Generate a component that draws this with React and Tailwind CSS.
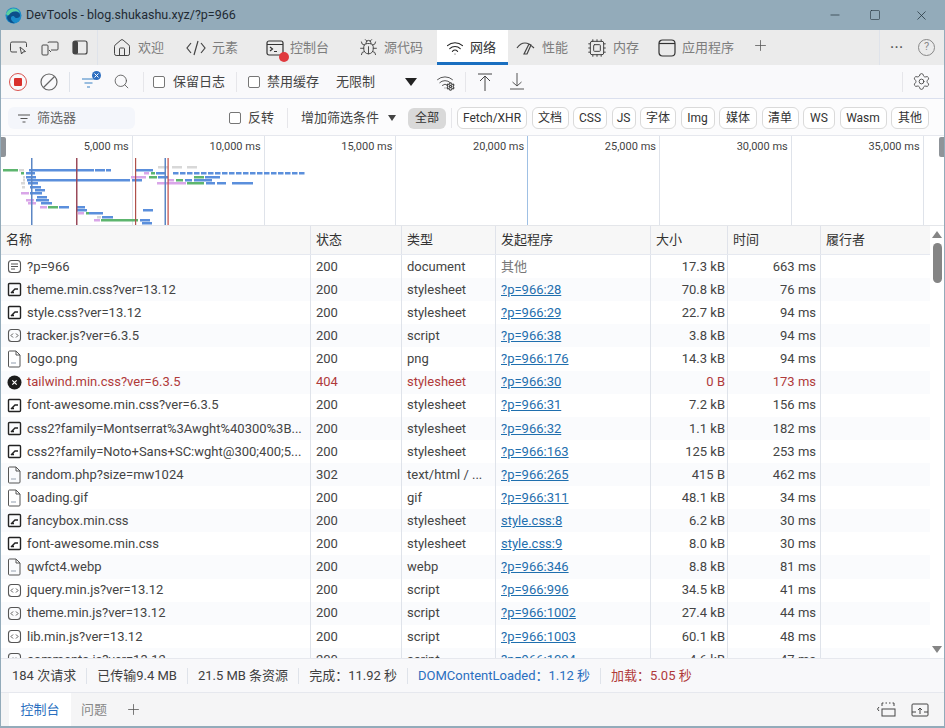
import React from 'react';
import { House, Bug, Wifi, Cpu, Plus, Settings, Search, Minus, X, Square } from 'lucide-react';

const FONT = "font-['Roboto','Noto_Sans_CJK_SC',sans-serif]";

const COLS = ['w-[310px]', 'w-[91px]', 'w-[94px]', 'w-[155px]', 'w-[77px]', 'w-[93px]', 'flex-1'];

const rows = [
  ['doc', '?p=966', '200', 'document', '其他', '17.3 kB', '663 ms'],
  ['css', 'theme.min.css?ver=13.12', '200', 'stylesheet', '?p=966:28', '70.8 kB', '76 ms'],
  ['css', 'style.css?ver=13.12', '200', 'stylesheet', '?p=966:29', '22.7 kB', '94 ms'],
  ['js', 'tracker.js?ver=6.3.5', '200', 'script', '?p=966:38', '3.8 kB', '94 ms'],
  ['img', 'logo.png', '200', 'png', '?p=966:176', '14.3 kB', '94 ms'],
  ['err', 'tailwind.min.css?ver=6.3.5', '404', 'stylesheet', '?p=966:30', '0 B', '173 ms'],
  ['css', 'font-awesome.min.css?ver=6.3.5', '200', 'stylesheet', '?p=966:31', '7.2 kB', '156 ms'],
  ['css', 'css2?family=Montserrat%3Awght%40300%3B...', '200', 'stylesheet', '?p=966:32', '1.1 kB', '182 ms'],
  ['css', 'css2?family=Noto+Sans+SC:wght@300;400;5...', '200', 'stylesheet', '?p=966:163', '125 kB', '253 ms'],
  ['img', 'random.php?size=mw1024', '302', 'text/html / ...', '?p=966:265', '415 B', '462 ms'],
  ['img', 'loading.gif', '200', 'gif', '?p=966:311', '48.1 kB', '34 ms'],
  ['css', 'fancybox.min.css', '200', 'stylesheet', 'style.css:8', '6.2 kB', '30 ms'],
  ['css', 'font-awesome.min.css', '200', 'stylesheet', 'style.css:9', '8.0 kB', '30 ms'],
  ['img', 'qwfct4.webp', '200', 'webp', '?p=966:346', '8.8 kB', '81 ms'],
  ['js', 'jquery.min.js?ver=13.12', '200', 'script', '?p=966:996', '34.5 kB', '41 ms'],
  ['js', 'theme.min.js?ver=13.12', '200', 'script', '?p=966:1002', '27.4 kB', '44 ms'],
  ['js', 'lib.min.js?ver=13.12', '200', 'script', '?p=966:1003', '60.1 kB', '48 ms'],
  ['js', 'comments.js?ver=13.12', '200', 'script', '?p=966:1004', '4.6 kB', '47 ms'],
];

const chips = [
  ['Fetch/XHR', 'w-[70px]'],
  ['文档', 'w-[37px]'],
  ['CSS', 'w-[34px]'],
  ['JS', 'w-[24px]'],
  ['字体', 'w-[36px]'],
  ['Img', 'w-[34px]'],
  ['媒体', 'w-[38px]'],
  ['清单', 'w-[37px]'],
  ['WS', 'w-[32px]'],
  ['Wasm', 'w-[47px]'],
  ['其他', 'w-[38px]'],
];

// x, width, row y, colour for the overview bars
const B = '#5b8fdc', G = '#5db56e', P = '#d9a6e8', L = '#d8d8d8';
const bars = [
  [2, 15, 33, G], [18, 5, 33, L], [28, 65, 33, B], [94, 10, 33, B], [105, 5, 33, B], [135, 7, 33, B], [142, 10, 33, B],
  [20, 3, 36, G], [25, 9, 36, B], [143, 5, 36, P], [150, 4, 36, G], [155, 10, 36, B],
  [22, 2, 40, L], [25, 10, 40, B], [130, 15, 40, P], [148, 8, 40, G], [157, 10, 40, B], [193, 10, 40, G], [204, 15, 40, B],
  [22, 2, 43, L], [26, 103, 43, B], [131, 10, 43, B], [167, 6, 43, P], [175, 7, 43, G], [184, 7, 43, B], [193, 18, 43, B],
  [20, 4, 46, L], [27, 10, 46, B], [156, 29, 46, P], [186, 17, 46, G], [205, 9, 46, B], [216, 9, 46, B], [231, 21, 46, B],
  [21, 3, 50, L], [29, 11, 50, B], [34, 10, 53, B], [20, 8, 56, P], [29, 12, 56, B], [36, 10, 60, B],
  [25, 8, 63, P], [35, 13, 63, B], [27, 8, 66, P], [40, 11, 66, B],
  [39, 7, 70, P], [47, 10, 70, G], [58, 10, 70, B], [75, 9, 70, B], [76, 10, 73, B], [142, 10, 73, B],
  [77, 6, 76, P], [85, 3, 76, G], [88, 14, 76, B], [96, 4, 80, L], [101, 11, 80, B],
  [93, 6, 83, P], [100, 37, 83, G], [139, 10, 83, B], [141, 10, 86, B],
];
// long dashed download row that runs along the top of the second group
for (let x = 172; x < 300; x += 7) bars.push([x, 5.5, 36, B]);
for (const x of [157, 171, 186]) bars.push([x, 10, 30, L]);

function ReqIcon({ type }) {
  if (type === 'err') {
    return (
      <svg width="15" height="15" viewBox="0 0 15 15" className="shrink-0">
        <circle cx="7.5" cy="7.5" r="7" fill="#1c1c1c" />
        <path d="M5.3 5.3l4.4 4.4M9.7 5.3l-4.4 4.4" stroke="#fff" strokeWidth="1.2" />
      </svg>
    );
  }
  if (type === 'img') {
    return (
      <svg width="15" height="18" viewBox="0 0 15 18" fill="none" className="shrink-0">
        <path d="M2.5 1h6.5l4 4v11a1 1 0 0 1-1 1H2.5a1 1 0 0 1-1-1V2a1 1 0 0 1 1-1z M9 1v4h4" stroke="#555" />
        <path d="M4 13h5" stroke="#c8ced6" strokeWidth="2" />
      </svg>
    );
  }
  return (
    <svg width="15" height="15" viewBox="0 0 15 15" fill="none" className="shrink-0">
      <rect x="1.5" y="1.5" width="12" height="12" rx={type === 'css' ? 1 : 3} stroke={type === 'css' ? '#222' : '#555'} strokeWidth={type === 'css' ? 1.4 : 1.1} />
      {type === 'doc' && <path d="M4 5h7M4 7.5h7M4 10h4" stroke="#555" />}
      {type === 'css' && <path d="M4 11l4-4h3M4.500 10.500h2.500" stroke="#222" strokeWidth="1.400" />}
      {type === 'js' && <path d="M6 5.500L4 7.500l2 2M9 5.500l2 2-2 2" stroke="#555" />}
    </svg>
  );
}

function Tab({ icon, label, width, active }) {
  return (
    <div className={`flex h-full shrink-0 items-center gap-[6px] ${width} ${active ? 'border-b-[3px] border-[#1a6fc0] bg-white pl-[9px] pt-[3px] text-[#333]' : 'text-[#7d7d7d]'}`}>
      {icon}
      <span>{label}</span>
    </div>
  );
}

function Check({ className = '' }) {
  return <span className={`h-[12px] w-[12px] shrink-0 rounded-[2px] border border-[#767676] bg-white ${className}`} />;
}

function Divider({ className = '' }) {
  return <span className={`w-px shrink-0 bg-[#dfe3ea] ${className}`} />;
}

export default function App() {
  return (
    <div className={`${FONT} flex h-[728px] w-[945px] flex-col overflow-hidden border-x border-b-2 border-[#93abba] bg-white text-[13px] text-[#444]`}>
      {/* title bar */}
      <div className="-mx-px flex h-[30px] shrink-0 items-center bg-[#93abba] pl-[5px] text-[#222]">
        <svg width="17" height="17" viewBox="0 0 17 17" className="shrink-0">
          <circle cx="8.5" cy="8.5" r="8" fill="#1b8bc9" />
          <path d="M2 11c1-6 8-8 12-5 2 2 1 5-2 5-3 0-2-2-4-2-3 0-3 5 2 7-4 1-7-2-8-5z" fill="#0c4f8a" />
          <path d="M1 7C3 1 12-1 15 6c-3-3-9-2-11 2-1 1-2 0-3-1z" fill="#59d0a0" />
        </svg>
        <span className="ml-[4px] text-[12.500px] text-[#1f2a33]">DevTools - blog.shukashu.xyz/?p=966</span>
        <div className="ml-auto flex items-center text-[#22313b]">
          <Minus size={14} strokeWidth={1.2} className="mr-[27px]" />
          <Square size={12} strokeWidth={1.2} className="mr-[33px] rounded-[2px]" />
          <X size={15} strokeWidth={1.2} className="mr-[16px]" />
        </div>
      </div>

      {/* main tabs */}
      <div className="flex h-[35px] shrink-0 items-center bg-[#ebebeb] text-[13px]">
        <div className="flex w-[96px] shrink-0 items-center pl-[8px] text-[#4a4a4a]">
          <svg width="20" height="16" viewBox="0 0 20 16" fill="none" stroke="currentColor">
            <path d="M8 12H3a1.500 1.500 0 0 1-1.500-1.500v-7A1.500 1.500 0 0 1 3 2h13a1.500 1.500 0 0 1 1.500 1.500V7" />
            <path d="M11 7l1.500 7 1.500-2 2.500-.5z" />
          </svg>
          <svg width="18" height="16" viewBox="0 0 18 16" fill="none" stroke="currentColor" className="ml-[12px]">
            <rect x="1" y="5" width="6" height="10" rx="1" />
            <path d="M7 3a1 1 0 0 1 1-1h8a1 1 0 0 1 1 1v6a1 1 0 0 1-1 1h-6M8 10l2 2" />
          </svg>
          <svg width="16" height="15" viewBox="0 0 16 15" className="ml-[13px]">
            <rect x="1" y="1" width="14" height="13" rx="2" fill="none" stroke="#444" strokeWidth="1.200" />
            <rect x="1" y="1" width="5" height="13" rx="1.500" fill="#444" />
          </svg>
        </div>
        <Divider className="h-full bg-[#cfcfcf]" />
        <div className="ml-[14px] flex h-full items-center">
          <Tab width="w-[74px]" label="欢迎" icon={<House size={20} strokeWidth={1.200} className="text-[#444]" />} />
          <Tab width="w-[80px]" label="元素" icon={
            <svg width="20" height="16" viewBox="0 0 20 16" fill="none" stroke="#444" strokeWidth="1.200"><path d="M5 3L1 8l4 5M15 3l4 5-4 5M12 1L8 15" /></svg>
          } />
          <Tab width="w-[93px]" label="控制台" icon={
            <span className="relative flex">
              <svg width="18" height="16" viewBox="0 0 18 16" fill="none" stroke="#333" strokeWidth="1.200"><rect x="1" y="1" width="16" height="14" rx="2" /><path d="M1 4.500h16M4 7l2.500 2L4 11M8 11.500h3" /></svg>
              <span className="absolute -bottom-[6px] -right-[5px] h-[10px] w-[10px] rounded-full bg-[#e0393e]" />
            </span>
          } />
          <Tab width="w-[78px]" label="源代码" icon={<Bug size={19} strokeWidth={1.200} className="text-[#444]" />} />
          <Tab width="w-[71px]" active label="网络" icon={<Wifi size={18} strokeWidth={1.400} className="text-[#222]" />} />
          <div className="w-[8px] shrink-0" />
          <Tab width="w-[71px]" label="性能" icon={
            <svg width="20" height="14" viewBox="0 0 20 14" fill="none" stroke="#444" strokeWidth="1.200"><path d="M1 7c2-3 5-5 8-5s6 2 9 5M8 13l5-10 2 1-4 9z" /></svg>
          } />
          <Tab width="w-[71px]" label="内存" icon={<Cpu size={20} strokeWidth={1.200} className="text-[#444]" />} />
          <Tab width="w-[94px]" label="应用程序" icon={
            <svg width="18" height="18" viewBox="0 0 18 18" fill="none" stroke="#333" strokeWidth="1.200"><rect x="1" y="1" width="16" height="16" rx="3.500" /><path d="M1 4.500h16" /></svg>
          } />
          <Plus size={17} strokeWidth={1.100} className="-mt-[4px] text-[#555]" />
        </div>
        <Divider className="ml-auto h-full bg-[#d6d6d6]" />
        <span className="ml-[10px] text-[12px] font-bold tracking-[1px] text-[#555]">···</span>
        <span className="ml-[14px] mr-[9px] flex h-[17px] w-[17px] items-center justify-center rounded-full border border-[#888] text-[11px] text-[#888]">?</span>
      </div>

      {/* network toolbar */}
      <div className="flex h-[34px] shrink-0 items-center border-b border-[#dbe0ee] bg-[#f9f9fb] pl-[8px]">
        <span className="flex h-[18px] w-[18px] shrink-0 items-center justify-center rounded-full border-[1.500px] border-[#d9534f]">
          <span className="h-[8px] w-[8px] rounded-[1px] bg-[#d9302c]" />
        </span>
        <svg width="18" height="18" viewBox="0 0 18 18" fill="none" stroke="#666" strokeWidth="1.200" className="ml-[13px] shrink-0"><circle cx="9" cy="9" r="8" /><path d="M3.500 14.500l11-11" /></svg>
        <Divider className="ml-[11px] h-[20px]" />
        <span className="relative ml-[11px] flex shrink-0">
          <svg width="16" height="14" viewBox="0 0 16 14" fill="none" stroke="#3b82c4" strokeWidth="1.200"><path d="M1 4h13M3.500 8h8M6 12h3" /></svg>
          <span className="absolute -right-[4px] -top-[4px] flex h-[9px] w-[9px] items-center justify-center rounded-full bg-[#2f6fc0]">
            <svg width="5" height="5" viewBox="0 0 5 5" stroke="#fff"><path d="M.5.500l4 4M4.500.500l-4 4" /></svg>
          </span>
        </span>
        <Search size={17} strokeWidth={1.200} className="ml-[16px] shrink-0 text-[#555]" />
        <Divider className="ml-[13px] h-[20px] bg-[#e6e6ea]" />
        <Check className="ml-[9px]" />
        <span className="ml-[8px] w-[63px]">保留日志</span>
        <Divider className="h-[20px] bg-[#e6e6ea]" />
        <Check className="ml-[11px]" />
        <span className="ml-[7px] w-[69px]">禁用缓存</span>
        <span className="w-[69px]">无限制</span>
        <svg width="12" height="8" viewBox="0 0 12 8" className="shrink-0"><path d="M0 0h12L6 8z" fill="#222" /></svg>
        <span className="relative ml-[19px] flex shrink-0">
          <Wifi size={18} strokeWidth={1.200} className="text-[#444]" />
          <Settings size={9} strokeWidth={3} className="absolute -right-[1px] bottom-0 text-[#444]" />
        </span>
        <Divider className="ml-[11px] h-[20px] bg-[#e6e6ea]" />
        <svg width="14" height="18" viewBox="0 0 14 18" fill="none" stroke="#444" className="ml-[12px] shrink-0"><path d="M0 1h14M7 18V3M2 8l5-5 5 5" /></svg>
        <svg width="14" height="17" viewBox="0 0 14 17" fill="none" stroke="#555" className="ml-[18px] shrink-0"><path d="M0 16h14M7 0v13M2.500 9L7 13l4.500-4" /></svg>
        <Divider className="ml-auto h-[20px] bg-[#e6e6ea]" />
        <Settings size={19} strokeWidth={1.100} className="ml-[9px] mr-[13px] shrink-0 text-[#444]" />
      </div>

      {/* filter row */}
      <div className="flex h-[36px] shrink-0 items-center bg-[#fcfcfd] pl-[7px] pt-[2px]">
        <div className="flex h-[22px] w-[127px] shrink-0 items-center rounded-[6px] bg-[#f4f6fb] pl-[10px] text-[#666]">
          <svg width="12" height="9" viewBox="0 0 12 9" fill="none" stroke="#555" strokeWidth="1.200"><path d="M0 1h12M2.500 4.500h7M4.500 8h3" /></svg>
          <span className="ml-[7px]">筛选器</span>
        </div>
        <Check className="ml-[94px]" />
        <span className="ml-[7px] w-[39px]">反转</span>
        <Divider className="h-[20px] bg-[#e6e6ea]" />
        <span className="ml-[13px] w-[79px] whitespace-nowrap">增加筛选条件</span>
        <svg width="8" height="6" viewBox="0 0 8 6" className="ml-[8px] shrink-0"><path d="M0 0h8L4 6z" fill="#444" /></svg>
        <span className="ml-[12px] flex h-[21px] w-[38px] shrink-0 items-center justify-center rounded-[6px] bg-[#d9d9d9] text-[12px] text-[#333]">全部</span>
        <Divider className="ml-[5px] h-[20px] bg-[#e6e6ea]" />
        <div className="ml-[5px] flex items-center gap-[4.500px]">
          {chips.map(([label, width]) => (
            <span key={label} className={`flex h-[22px] shrink-0 items-center justify-center rounded-[6px] border border-[#dadada] bg-white text-[12px] text-[#333] ${width}`}>
              {label}
            </span>
          ))}
        </div>
      </div>

      {/* overview */}
      <div className="relative h-[90px] shrink-0 border-t border-[#e6e8ee] bg-white">
        <div className="grid h-full grid-cols-[repeat(7,131.800px)]">
          {['5,000', '10,000', '15,000', '20,000', '25,000', '30,000', '35,000'].map((t, i) => (
            <div key={t} className={`h-full border-r pr-[3px] pt-[3px] text-right text-[11px] text-[#444] ${i === 3 ? 'border-[#9fc0e4]' : 'border-[#dfe3ea]'}`}>{t} ms</div>
          ))}
        </div>
        <svg width="945" height="90" viewBox="0 0 945 90" className="absolute left-0 top-0">
          {bars.map(([x, w, y, c], i) => <rect key={i} x={x} y={y} width={w} height="2.500" fill={c} />)}
          <rect x="30" y="22" width="1.500" height="67" fill="#5b86c4" />
          <rect x="75" y="22" width="1.500" height="67" fill="#9a4a5a" />
          <rect x="134" y="22" width="1.200" height="67" fill="#b0504a" />
          <rect x="163.500" y="22" width="1.500" height="67" fill="#5b86c4" />
          <rect x="166.500" y="22" width="1.200" height="67" fill="#c04a44" />
        </svg>
        <span className="absolute -left-px top-[1px] h-[20px] w-[6px] rounded-r-[2px] bg-[#8f9499]" />
        <span className="absolute -right-px top-[1px] h-[20px] w-[6px] rounded-l-[2px] bg-[#8f9499]" />
      </div>

      {/* request table */}
      <div className="flex min-h-0 flex-1 border-t border-[#e4e6ea]">
        <div className="min-w-0 flex-1 overflow-hidden">
          <div className="flex h-[29px] items-center border-b border-[#e6e9f0] bg-[#f7f7f7] text-[#333]">
            {['名称', '状态', '类型', '发起程序', '大小', '时间', '履行者'].map((h, i) => (
              <div key={h} className={`flex h-full items-center pb-[1px] pl-[5px] ${COLS[i]} ${i < 6 ? 'border-r border-[#e0e3ea]' : ''}`}>{h}</div>
            ))}
          </div>
          {rows.map(([type, name, status, kind, init, size, time], i) => {
            const err = status === '404';
            const tone = err ? 'text-[#b03a3a]' : '';
            return (
              <div key={i} className={`flex h-[23.120px] items-center whitespace-nowrap ${i % 2 ? 'bg-[#fafbfd]' : 'bg-white'}`}>
                <div className={`flex h-full items-center gap-[5px] border-r border-[#dfe3ea] pl-[6px] ${COLS[0]} ${tone}`}>
                  <ReqIcon type={type} />
                  <span>{name}</span>
                </div>
                <div className={`flex h-full items-center border-r border-[#dfe3ea] pl-[5px] ${COLS[1]} ${tone}`}>{status}</div>
                <div className={`flex h-full items-center border-r border-[#dfe3ea] pl-[5px] ${COLS[2]} ${tone}`}>{kind}</div>
                <div className={`flex h-full items-center border-r border-[#dfe3ea] pl-[5px] ${COLS[3]} ${i === 0 ? 'text-[#777]' : 'text-[#1f6fae] underline'}`}>{init}</div>
                <div className={`flex h-full items-center justify-end border-r border-[#dfe3ea] pr-[2px] ${COLS[4]} ${tone}`}>{size}</div>
                <div className={`flex h-full items-center justify-end border-r border-[#dfe3ea] pr-[4px] ${COLS[5]} ${tone}`}>{time}</div>
                <div className={COLS[6]} />
              </div>
            );
          })}
        </div>
        {/* scrollbar */}
        <div className="flex w-[14px] shrink-0 flex-col items-center bg-white pt-[5px]">
          <svg width="10" height="7" viewBox="0 0 10 7" className="shrink-0"><path d="M0 7h10L5 0z" fill="#858585" /></svg>
          <span className="mt-[5px] h-[40px] w-[9px] shrink-0 rounded-full bg-[#858585]" />
          <svg width="10" height="7" viewBox="0 0 10 7" className="mb-[5px] mt-auto shrink-0"><path d="M0 0h10L5 7z" fill="#858585" /></svg>
        </div>
      </div>

      {/* status bar */}
      <div className="flex h-[35px] shrink-0 items-center border-y border-[#e6e8ee] bg-[#f8f8fa] pl-[11px] text-[#3f3f3f]">
        <span>184 次请求</span>
        <Divider className="ml-[10px] h-[16px]" />
        <span className="ml-[10px]">已传输9.4 MB</span>
        <Divider className="ml-[10px] h-[16px]" />
        <span className="ml-[10px]">21.5 MB 条资源</span>
        <Divider className="ml-[10px] h-[16px]" />
        <span className="ml-[10px]">完成：11.92 秒</span>
        <Divider className="ml-[10px] h-[16px]" />
        <span className="ml-[10px] text-[#2a6fc0]">DOMContentLoaded：1.12 秒</span>
        <Divider className="ml-[10px] h-[16px]" />
        <span className="ml-[10px] text-[#b03a3a]">加载：5.05 秒</span>
      </div>

      {/* drawer tabs */}
      <div className="flex h-[33px] shrink-0 items-center bg-[#f5f5f6] pl-[8px]">
        <span className="flex h-full w-[62px] items-center justify-center bg-white text-[#2a6fc0]">控制台</span>
        <span className="ml-[10px] text-[#888]">问题</span>
        <Plus size={17} strokeWidth={1.100} className="ml-[18px] text-[#555]" />
        <svg width="19" height="16" viewBox="0 0 19 16" fill="none" stroke="#444" className="ml-auto"><path d="M5 1h1.500M8.500 1H10M12 1h1.500M15.500 1H17M17 1v3M5 1v3" /><rect x="5" y="7" width="13" height="7" /><path d="M2 5L.500 7 2 9" /></svg>
        <svg width="18" height="14" viewBox="0 0 18 14" fill="none" stroke="#444" className="ml-[15px] mr-[15px]"><rect x="1" y="1" width="16" height="12" rx="1" /><path d="M1 9h4M13 9h4M9 11V5M7 7l2-2 2 2" /></svg>
      </div>
    </div>
  );
}
